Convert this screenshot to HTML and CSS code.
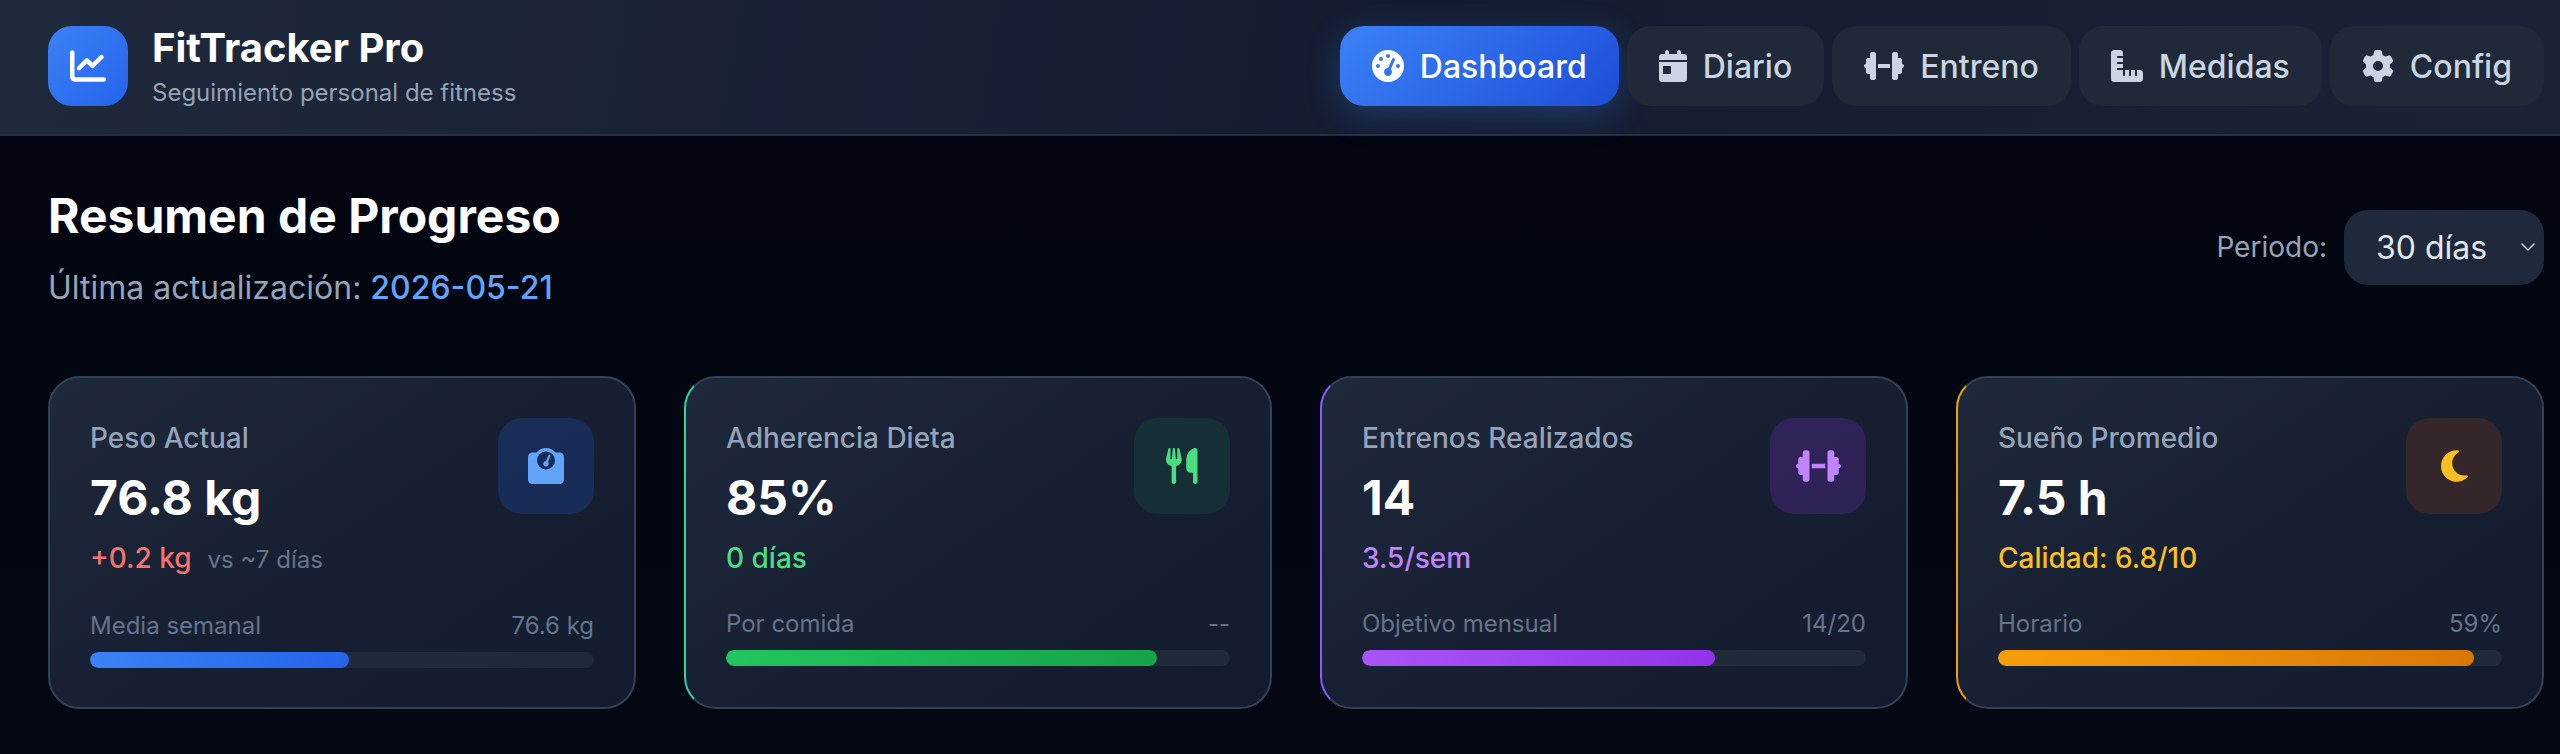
FILE: index.html
```html
<!DOCTYPE html>
<html lang="es">
<head>
  <meta charset="UTF-8" />
  <meta name="viewport" content="width=device-width, initial-scale=1.0" />
  <title>FitTracker Pro</title>
  <link rel="stylesheet" href="styles.css">
</head>
<body>
  <header class="topbar">
    <div class="brand">
      <div class="brand-logo">
        <svg class="icon-logo" viewBox="0 0 512 512"><path d="M64 64c0-17.700-14.300-32-32-32S0 46.300 0 64V400c0 44.200 35.800 80 80 80H480c17.700 0 32-14.300 32-32s-14.300-32-32-32H80c-8.800 0-16-7.200-16-16V64zm406.600 86.600c12.500-12.500 12.500-32.800 0-45.300s-32.800-12.500-45.300 0L320 210.700l-57.400-57.400c-12.500-12.500-32.800-12.500-45.300 0l-112 112c-12.500 12.500-12.500 32.800 0 45.300s32.800 12.500 45.300 0L240 221.300l57.400 57.400c12.500 12.500 32.800 12.500 45.300 0l128-128z"/></svg>
      </div>
      <div>
        <h1>FitTracker Pro</h1>
        <p class="brand-sub">Seguimiento personal de fitness</p>
      </div>
    </div>

    <nav class="nav">
      <a class="nav-btn active" href="#">
        <svg viewBox="0 0 512 512"><path d="M0 256a256 256 0 1 1 512 0A256 256 0 1 1 0 256zM288 96a32 32 0 1 0 -64 0 32 32 0 1 0 64 0zM256 416c35.300 0 64-28.700 64-64c0-17.400-6.900-33.100-18.100-44.600L366 161.700c5.300-12.100-.2-26.300-12.300-31.600s-26.300 .2-31.600 12.300L257.900 288c-.6 0-1.300 0-1.900 0c-35.300 0-64 28.700-64 64s28.700 64 64 64zM176 144a32 32 0 1 0 -64 0 32 32 0 1 0 64 0zM96 288a32 32 0 1 0 0-64 32 32 0 1 0 0 64zm352-32a32 32 0 1 0 -64 0 32 32 0 1 0 64 0z"/></svg>
        Dashboard
      </a>
      <a class="nav-btn" href="#">
        <svg viewBox="0 0 448 512"><path d="M128 0c17.700 0 32 14.300 32 32V64H288V32c0-17.700 14.300-32 32-32s32 14.300 32 32V64h48c26.500 0 48 21.500 48 48v48H0V112C0 85.500 21.500 64 48 64H96V32c0-17.700 14.300-32 32-32zM0 192H448V464c0 26.500-21.500 48-48 48H48c-26.500 0-48-21.500-48-48V192zm80 64c-8.800 0-16 7.200-16 16v96c0 8.800 7.200 16 16 16h96c8.800 0 16-7.200 16-16V272c0-8.800-7.200-16-16-16H80z"/></svg>
        Diario
      </a>
      <a class="nav-btn" href="#">
        <svg viewBox="0 0 640 512"><path d="M96 64c0-17.700 14.300-32 32-32h32c17.700 0 32 14.300 32 32V224v64V448c0 17.700-14.300 32-32 32H128c-17.700 0-32-14.300-32-32V384H64c-17.700 0-32-14.300-32-32V288c-17.700 0-32-14.300-32-32s14.300-32 32-32V160c0-17.700 14.300-32 32-32H96V64zm448 0v64h32c17.700 0 32 14.300 32 32v64c17.700 0 32 14.300 32 32s-14.300 32-32 32v64c0 17.700-14.300 32-32 32H544v64c0 17.700-14.300 32-32 32H480c-17.700 0-32-14.300-32-32V288 224 64c0-17.700 14.300-32 32-32h32c17.700 0 32 14.300 32 32zM416 224v64H224V224H416z"/></svg>
        Entreno
      </a>
      <a class="nav-btn" href="#">
        <svg viewBox="0 0 512 512"><path d="M.2 468.900C2.700 493.100 23.100 512 48 512l96 0 320 0c26.500 0 48-21.500 48-48l0-96c0-26.500-21.500-48-48-48l-48 0 0 80c0 8.800-7.200 16-16 16s-16-7.200-16-16l0-80-64 0 0 80c0 8.800-7.200 16-16 16s-16-7.200-16-16l0-80-64 0 0 80c0 8.800-7.200 16-16 16s-16-7.200-16-16l0-80-80 0c-8.800 0-16-7.200-16-16s7.200-16 16-16l80 0 0-64-80 0c-8.800 0-16-7.200-16-16s7.200-16 16-16l80 0 0-64-80 0c-8.800 0-16-7.200-16-16s7.200-16 16-16l80 0 0-48c0-26.500-21.500-48-48-48L48 0C21.500 0 0 21.500 0 48L0 368l0 96c0 1.700 .1 3.300 .2 4.900z"/></svg>
        Medidas
      </a>
      <a class="nav-btn" href="#">
        <svg viewBox="0 0 512 512"><path d="M495.900 166.600c3.200 8.700 .5 18.400-6.400 24.600l-43.300 39.400c1.100 8.300 1.700 16.800 1.700 25.400s-.6 17.100-1.700 25.400l43.300 39.400c6.900 6.200 9.600 15.900 6.400 24.600c-4.400 11.900-9.700 23.300-15.800 34.300l-4.700 8.100c-6.600 11-14 21.400-22.100 31.200c-5.900 7.200-15.700 9.600-24.500 6.800l-55.700-17.700c-13.400 10.300-28.200 18.900-44 25.400l-12.500 57.100c-2 9.100-9 16.300-18.200 17.800c-13.800 2.300-28 3.500-42.500 3.500s-28.700-1.200-42.500-3.500c-9.200-1.500-16.200-8.700-18.200-17.800l-12.500-57.100c-15.800-6.500-30.600-15.100-44-25.400L83.100 425.900c-8.800 2.800-18.600 .3-24.500-6.800c-8.100-9.800-15.500-20.200-22.100-31.200l-4.700-8.100c-6.100-11-11.400-22.400-15.800-34.300c-3.200-8.700-.5-18.400 6.400-24.600l43.300-39.400C64.600 273.100 64 264.600 64 256s.6-17.100 1.700-25.400L22.400 191.200c-6.900-6.200-9.600-15.900-6.400-24.600c4.400-11.900 9.700-23.300 15.800-34.300l4.700-8.100c6.600-11 14-21.400 22.100-31.200c5.900-7.200 15.700-9.600 24.500-6.800l55.700 17.700c13.400-10.300 28.200-18.900 44-25.400l12.500-57.100c2-9.100 9-16.300 18.200-17.800C227.300 1.200 241.500 0 256 0s28.700 1.200 42.500 3.500c9.200 1.500 16.200 8.700 18.200 17.800l12.500 57.100c15.800 6.500 30.600 15.100 44 25.400l55.700-17.700c8.800-2.800 18.600-.3 24.500 6.800c8.100 9.800 15.500 20.200 22.100 31.200l4.700 8.100c6.100 11 11.400 22.400 15.800 34.300zM256 336a80 80 0 1 0 0-160 80 80 0 1 0 0 160z"/></svg>
        Config
      </a>
    </nav>
  </header>

  <main class="content">
    <section class="page-head">
      <div>
        <h2>Resumen de Progreso</h2>
        <p class="updated">Última actualización: <span class="updated-date">2026-05-21</span></p>
      </div>
      <div class="period">
        <span class="period-label">Periodo:</span>
        <div class="period-select">
          30 días
          <svg viewBox="0 0 16 10"><path d="M1.500 1.500l6.500 6.500 6.500-6.500"/></svg>
        </div>
      </div>
    </section>

    <section class="cards">
      <article class="card card-blue">
        <div class="card-top">
          <div>
            <div class="card-label">Peso Actual</div>
            <div class="card-value">76.8 kg</div>
            <div class="card-delta"><span class="delta-red">+0.2 kg</span><span class="delta-note">vs ~7 días</span></div>
          </div>
          <div class="card-icon">
            <svg viewBox="0 0 512 512"><path d="M128 176a128 128 0 1 1 256 0 128 128 0 1 1 -256 0zM391.800 64C359.500 24.900 310.700 0 256 0S152.500 24.900 120.200 64H64C28.700 64 0 92.700 0 128V448c0 35.300 28.700 64 64 64H448c35.300 0 64-28.700 64-64V128c0-35.300-28.700-64-64-64H391.800zM296 224c0-10.600-4.100-20.200-10.900-27.400l33.600-78.300c3.500-8.100-.3-17.500-8.400-21s-17.500 .3-21 8.400L255.700 184c-22 .1-39.700 18-39.700 40c0 22.100 17.900 40 40 40s40-17.900 40-40z"/></svg>
          </div>
        </div>
        <div class="card-foot"><span>Media semanal</span><span>76.6 kg</span></div>
        <div class="bar"><div class="bar-fill" style="width: 51.3%"></div></div>
      </article>

      <article class="card card-green">
        <div class="card-top">
          <div>
            <div class="card-label">Adherencia Dieta</div>
            <div class="card-value">85%</div>
            <div class="card-delta">0 días</div>
          </div>
          <div class="card-icon">
            <svg viewBox="0 0 448 512"><path d="M416 0C400 0 288 32 288 176V288c0 35.300 28.700 64 64 64h32V480c0 17.700 14.300 32 32 32s32-14.300 32-32V352 240 32c0-17.700-14.300-32-32-32zM64 16C64 7.800 57.900 1 49.700 .1S34.200 4.600 32.400 12.500L2.100 148.800C.7 155.100 0 161.500 0 167.900c0 45.900 35.100 83.600 80 87.700V480c0 17.700 14.300 32 32 32s32-14.300 32-32V255.600c44.900-4.100 80-41.800 80-87.700c0-6.400-.7-12.800-2.100-19.100L191.600 12.500c-1.800-8-9.300-13.300-17.400-12.400S160 7.800 160 16V150.200c0 5.400-4.400 9.800-9.800 9.800c-5.100 0-9.300-3.900-9.800-9L127.900 14.600C127.200 6.300 120.300 0 112 0s-15.200 6.300-15.900 14.600L83.700 151c-.5 5.100-4.700 9-9.800 9c-5.400 0-9.800-4.400-9.800-9.800V16zm48.300 152l-.3 0-.3 0 .3-.7 .3 .7z"/></svg>
          </div>
        </div>
        <div class="card-foot"><span>Por comida</span><span>--</span></div>
        <div class="bar"><div class="bar-fill" style="width: 85.500%"></div></div>
      </article>

      <article class="card card-purple">
        <div class="card-top">
          <div>
            <div class="card-label">Entrenos Realizados</div>
            <div class="card-value">14</div>
            <div class="card-delta">3.5/sem</div>
          </div>
          <div class="card-icon">
            <svg viewBox="0 0 640 512"><path d="M96 64c0-17.700 14.300-32 32-32h32c17.700 0 32 14.300 32 32V224v64V448c0 17.700-14.300 32-32 32H128c-17.700 0-32-14.300-32-32V384H64c-17.700 0-32-14.300-32-32V288c-17.700 0-32-14.300-32-32s14.300-32 32-32V160c0-17.700 14.300-32 32-32H96V64zm448 0v64h32c17.700 0 32 14.300 32 32v64c17.700 0 32 14.300 32 32s-14.300 32-32 32v64c0 17.700-14.300 32-32 32H544v64c0 17.700-14.300 32-32 32H480c-17.700 0-32-14.300-32-32V288 224 64c0-17.700 14.300-32 32-32h32c17.700 0 32 14.300 32 32zM416 224v64H224V224H416z"/></svg>
          </div>
        </div>
        <div class="card-foot"><span>Objetivo mensual</span><span>14/20</span></div>
        <div class="bar"><div class="bar-fill" style="width: 70%"></div></div>
      </article>

      <article class="card card-amber">
        <div class="card-top">
          <div>
            <div class="card-label">Sueño Promedio</div>
            <div class="card-value">7.5 h</div>
            <div class="card-delta">Calidad: 6.8/10</div>
          </div>
          <div class="card-icon">
            <svg viewBox="0 0 384 512"><path d="M223.500 32C100 32 0 132.300 0 256S100 480 223.500 480c60.600 0 115.500-24.200 155.800-63.400c5-4.900 6.300-12.500 3.100-18.700s-10.100-9.700-17-8.500c-9.800 1.700-19.800 2.600-30.100 2.600c-96.900 0-175.500-78.800-175.500-176c0-65.800 36-123.100 89.300-153.300c6.100-3.500 9.200-10.500 7.700-17.300s-7.300-11.900-14.300-12.500c-6.300-.5-12.600-.8-19-.8z"/></svg>
          </div>
        </div>
        <div class="card-foot"><span>Horario</span><span>59%</span></div>
        <div class="bar"><div class="bar-fill" style="width: 94.400%"></div></div>
      </article>
    </section>
  </main>
</body>
</html>
```

FILE: styles.css
```css
:root {
  --slate-800: #1e293b;
  --line: #334155;
  --label: #94a3b8;
  --muted: #64748b;
}

* {
  box-sizing: border-box;
}

html,
body {
  height: 100%;
}

body {
  margin: 0;
  background: linear-gradient(180deg, #020510 0%, #030812 100%);
  color: #fff;
  font-family: "Inter", "Noto Sans", sans-serif;
  overflow: hidden;
}

/* top bar */
.topbar {
  display: flex;
  justify-content: space-between;
  align-items: center;
  height: 136px;
  padding: 0 16px 2px 48px;
  background: linear-gradient(100deg, #1e293b 0%, #141c30 55%, #1a2336 100%);
  border-bottom: 2px solid #262f40;
}

.brand {
  display: flex;
  align-items: center;
  gap: 24px;
}

.brand-logo {
  display: flex;
  align-items: center;
  justify-content: center;
  width: 80px;
  height: 80px;
  border-radius: 24px;
  background: linear-gradient(135deg, #3b82f6, #2563eb);
}

.icon-logo {
  width: 36px;
  height: 36px;
  fill: #fff;
}

h1 {
  margin: 0;
  font-size: 40px;
  line-height: 48px;
  font-weight: 700;
}

.brand-sub {
  margin: 5px 0 0;
  font-size: 24px;
  line-height: 32px;
  color: var(--label);
}

.nav {
  display: flex;
  gap: 8px;
}

.nav-btn {
  display: flex;
  align-items: center;
  gap: 16px;
  height: 80px;
  padding: 0 32px;
  border-radius: 24px;
  background: #1f2937;
  color: #cbd5e1;
  font-size: 32px;
  font-weight: 500;
  text-decoration: none;
}

.nav-btn svg {
  height: 32px;
  fill: currentColor;
}

.nav-btn.active {
  background: linear-gradient(135deg, #3b82f6, #1d4ed8);
  color: #fff;
  box-shadow: 0 8px 32px rgba(59, 130, 246, 0.3);
}

/* main */
.content {
  padding: 48px 16px 0 48px;
}

.page-head {
  display: flex;
  justify-content: space-between;
  align-items: center;
  margin-bottom: 64px;
}

h2 {
  margin: 0;
  font-size: 48px;
  line-height: 64px;
  font-weight: 700;
}

.updated {
  margin: 16px 0 0;
  font-size: 32px;
  line-height: 48px;
  color: var(--label);
}

.updated-date {
  color: #60a5fa;
  font-weight: 500;
}

.period {
  display: flex;
  align-items: center;
  gap: 17px;
  margin-bottom: 2px;
}

.period-label {
  font-size: 28px;
  color: var(--label);
}

.period-select {
  display: flex;
  align-items: center;
  justify-content: space-between;
  width: 200px;
  height: 75px;
  padding: 0 8px 0 32px;
  border-radius: 24px;
  background: var(--slate-800);
  font-size: 32px;
  color: #e2e8f0;
}

.period-select svg {
  width: 16px;
  height: 10px;
  fill: none;
  stroke: #cbd5e1;
  stroke-width: 1.5;
}

/* cards */
.cards {
  display: grid;
  grid-template-columns: repeat(4, 1fr);
  gap: 48px;
}

.card {
  padding: 40px 40px 39px;
  border: 2px solid var(--line);
  border-radius: 32px;
  background: linear-gradient(145deg, #1e293b 0%, #172033 50%, #131b2e 100%);
}

.card-top {
  display: flex;
  justify-content: space-between;
  align-items: flex-start;
}

.card-label {
  margin-top: 2px;
  font-size: 28px;
  line-height: 36px;
  font-weight: 500;
  color: var(--label);
}

.card-value {
  margin-top: 12px;
  font-size: 48px;
  line-height: 60px;
  font-weight: 700;
}

.card-delta {
  margin-top: 10px;
  font-size: 28px;
  line-height: 40px;
  font-weight: 500;
}

.delta-red {
  color: #f87171;
}

.delta-note {
  margin-left: 16px;
  font-size: 24px;
  font-weight: 400;
  color: var(--muted);
}

.card-icon {
  display: flex;
  align-items: center;
  justify-content: center;
  width: 96px;
  height: 96px;
  border-radius: 24px;
}

.card-icon svg {
  height: 36px;
  fill: currentColor;
}

.card-foot {
  display: flex;
  justify-content: space-between;
  margin-top: 30px;
  font-size: 24px;
  line-height: 32px;
  color: var(--muted);
}

.bar {
  height: 16px;
  margin-top: 10px;
  border-radius: 999px;
  background: #1f2a3a;
  overflow: hidden;
}

.bar-fill {
  height: 100%;
  border-radius: 999px;
}

.card-blue .card-icon {
  background: rgba(37, 99, 235, 0.2);
  color: #60a5fa;
}
.card-blue .bar-fill {
  background: linear-gradient(90deg, #3b82f6, #2563eb);
}

.card-green {
  border-left-color: #34d399;
}
.card-green .card-icon {
  background: rgba(34, 197, 94, 0.1);
  color: #4ade80;
}
.card-green .card-delta {
  color: #4ade80;
}
.card-green .bar-fill {
  background: linear-gradient(90deg, #22c55e, #16a34a);
}

.card-purple {
  border-left-color: #8b5cf6;
}
.card-purple .card-icon {
  background: rgba(147, 51, 234, 0.2);
  color: #c084fc;
}
.card-purple .card-delta {
  color: #c084fc;
}
.card-purple .bar-fill {
  background: linear-gradient(90deg, #a855f7, #9333ea);
}

.card-amber {
  border-left-color: #f59e0b;
}
.card-amber .card-icon {
  background: #35262a;
  color: #fbbf24;
}
.card-amber .card-delta {
  color: #fbbf24;
}
.card-amber .bar-fill {
  background: linear-gradient(90deg, #f59e0b, #d97706);
}
```
